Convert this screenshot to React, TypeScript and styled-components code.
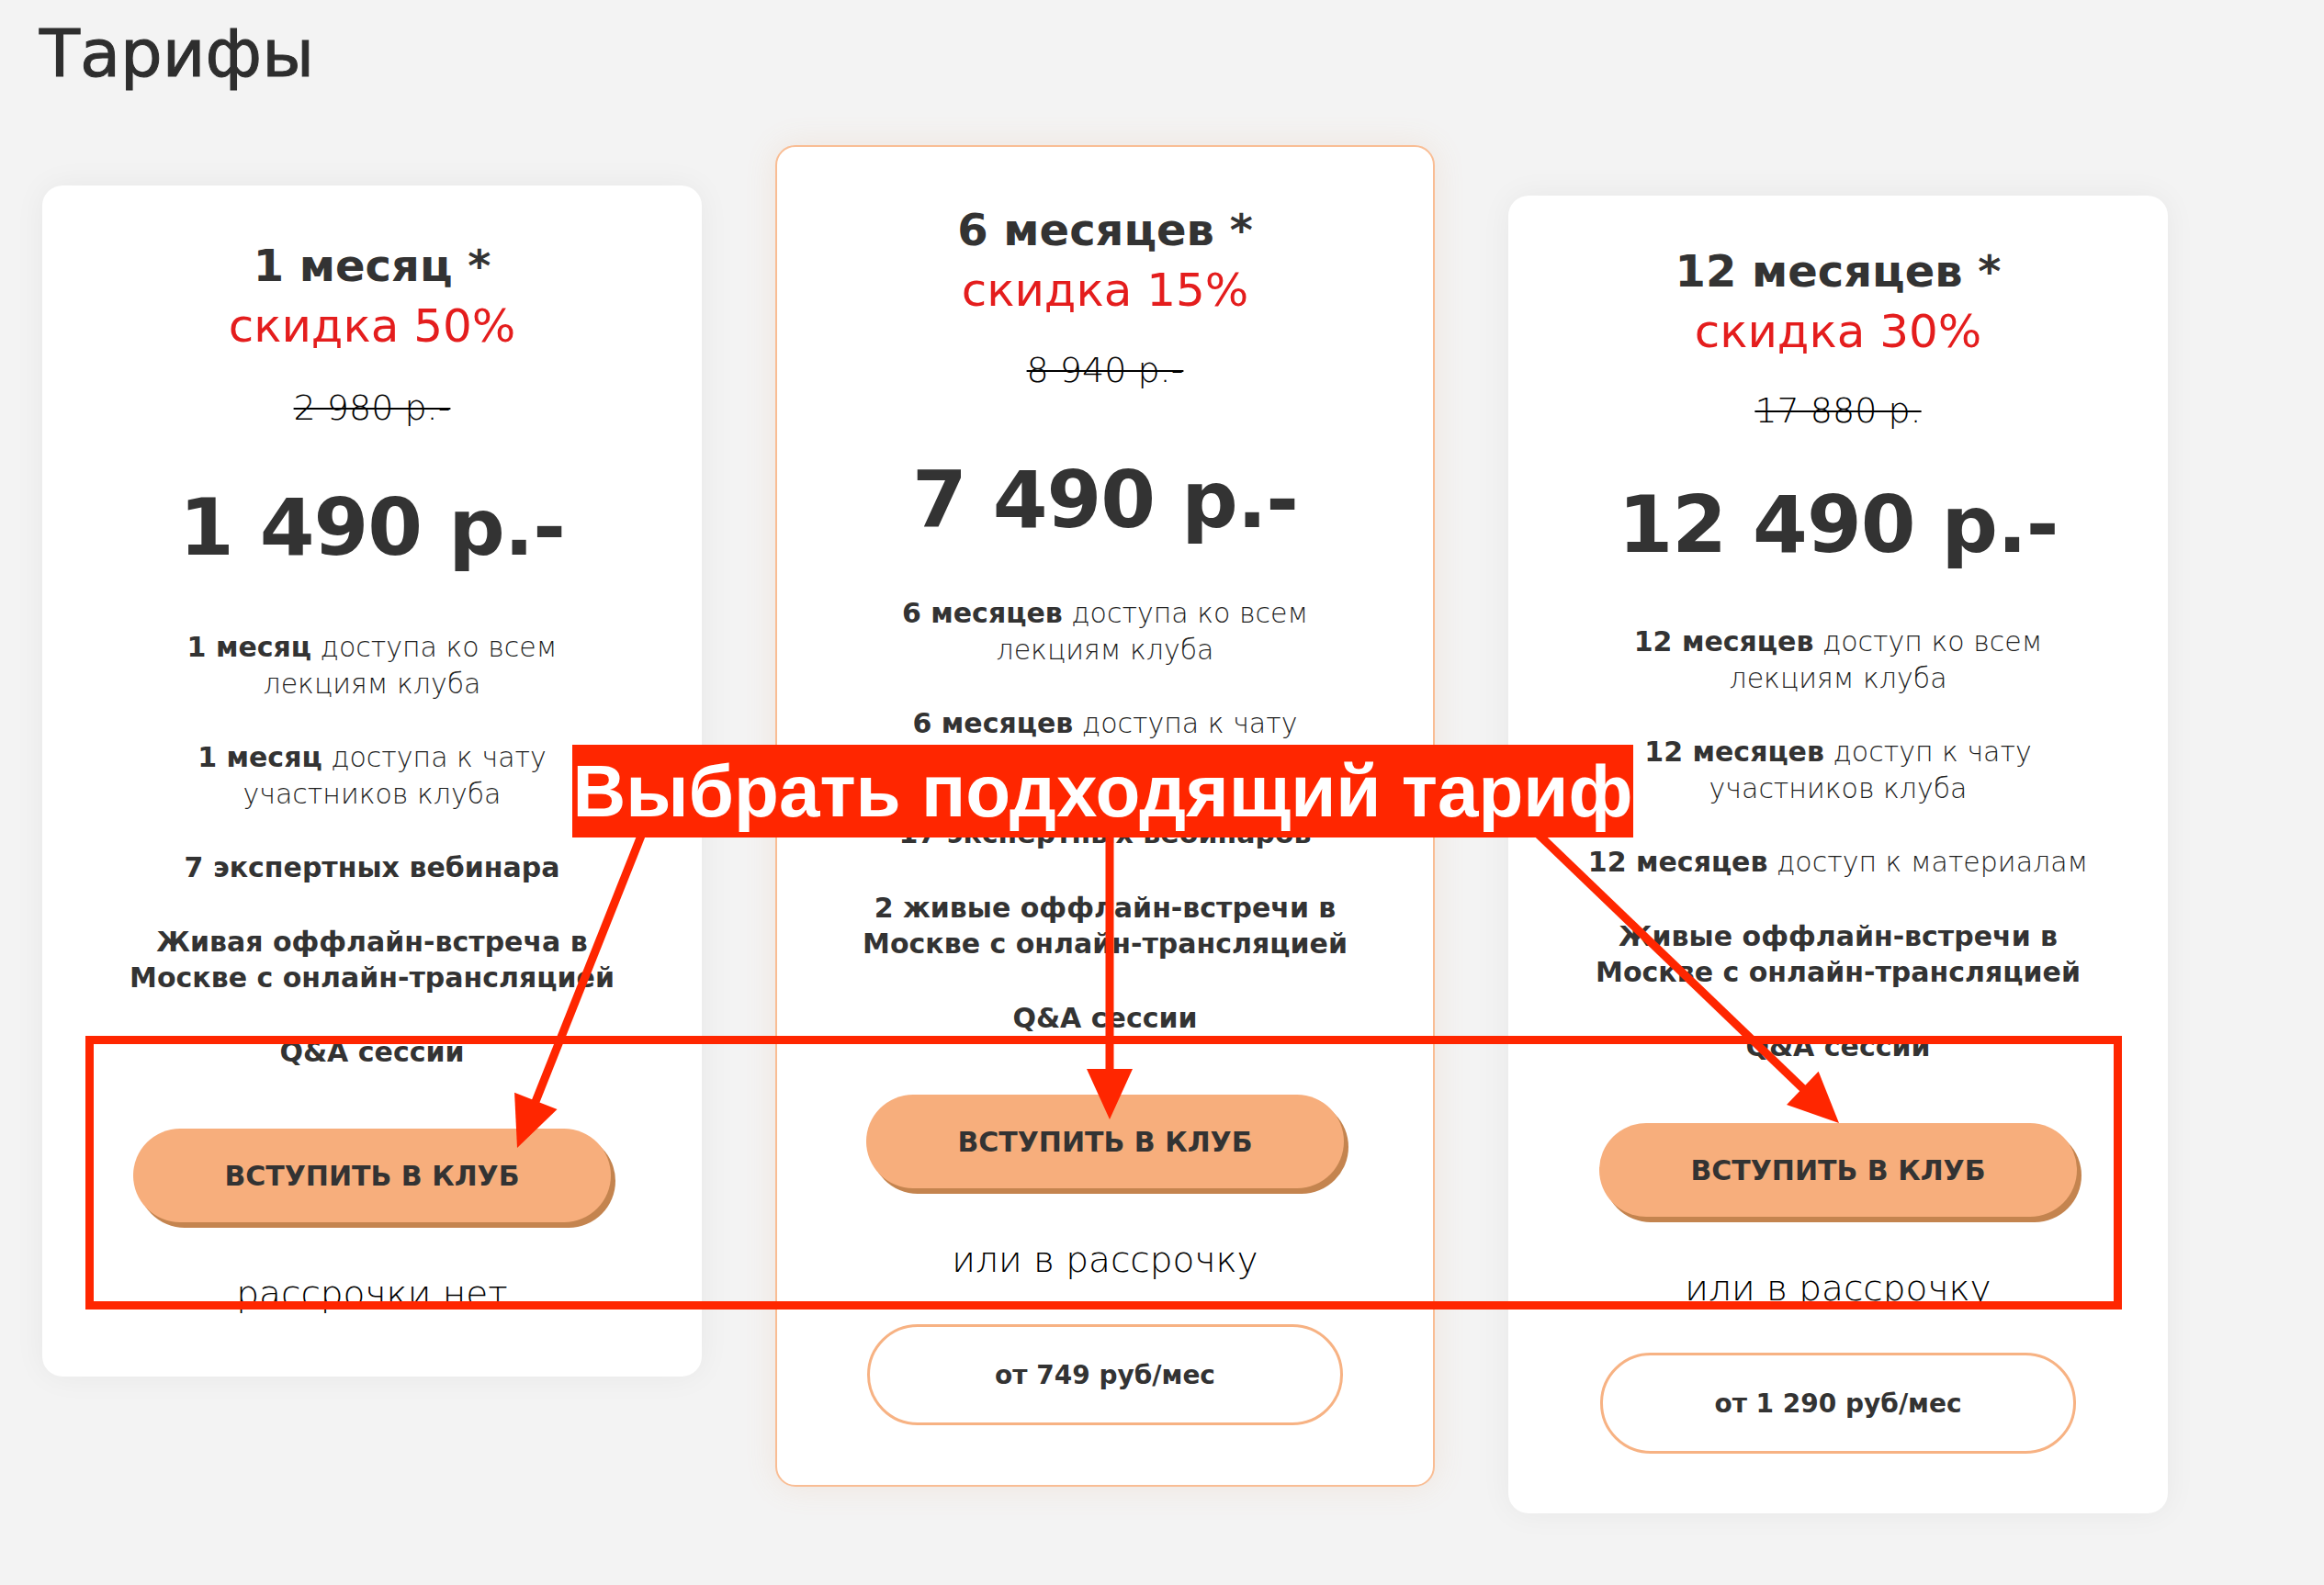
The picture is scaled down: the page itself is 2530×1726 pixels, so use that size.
import React from "react";
import styled, { createGlobalStyle } from "styled-components";

const GlobalStyle = createGlobalStyle`
  html, body {
    margin: 0;
    padding: 0;
    background: #f3f3f3;
  }
  body {
    font-family: "DejaVu Sans", "Noto Sans", sans-serif;
    color: #333;
  }
`;

const Page = styled.div`
  position: relative;
  width: 2530px;
  height: 1726px;
  overflow: hidden;
  background: #f3f3f3;
`;

const Title = styled.h1`
  margin: 22px 0 0 43px;
  font-size: 72px;
  line-height: 72px;
  font-weight: 400;
  color: #2e2e2e;
  -webkit-text-stroke: 1px #2e2e2e;
`;

const Row = styled.div`
  display: flex;
  align-items: flex-start;
  gap: 80px;
  padding-left: 46px;
  margin-top: 64px;
`;

const Card = styled.div<{ $offset: number; $padTop: number; $featured?: boolean }>`
  width: 718px;
  box-sizing: border-box;
  margin-top: ${(p) => p.$offset}px;
  padding: ${(p) => p.$padTop}px 0 65px;
  background: #fff;
  border-radius: 22px;
  border: ${(p) => (p.$featured ? "2px solid #f9bd94" : "none")};
  box-shadow: ${(p) =>
    p.$featured
      ? "0 0 34px rgba(225, 150, 95, 0.14)"
      : "0 0 34px rgba(0, 0, 0, 0.05)"};
  display: flex;
  flex-direction: column;
  align-items: center;
  text-align: center;
`;

const PlanName = styled.div`
  font-size: 48px;
  line-height: 66px;
  font-weight: 700;
  color: #333;
`;

const Discount = styled.div`
  font-size: 50px;
  line-height: 66px;
  font-weight: 400;
  color: #e41d1d;
`;

const OldPrice = styled.div<{ $shift: number }>`
  margin-top: ${(p) => 31 + p.$shift}px;
  font-size: 38px;
  line-height: 50px;
  font-weight: 300;
  color: #000;
  text-decoration: line-through;
  text-decoration-thickness: 2px;
`;

const Price = styled.div<{ $shift: number }>`
  margin-top: ${(p) => 50 + p.$shift}px;
  font-size: 86px;
  line-height: 110px;
  font-weight: 700;
  letter-spacing: -1px;
  color: #333;
`;

const Features = styled.div<{ $shift: number }>`
  margin-top: ${(p) => 56 + p.$shift}px;
  display: flex;
  flex-direction: column;
  align-items: center;
  gap: 41px;
`;

const Feature = styled.div`
  font-size: 30px;
  line-height: 39.5px;
  white-space: nowrap;

  b {
    font-weight: 700;
    color: #333;
  }
`;

const FeatureLine = styled.div<{ $bold?: boolean }>`
  font-weight: ${(p) => (p.$bold ? 700 : 300)};
  color: ${(p) => (p.$bold ? "#333" : "#1f1f1f")};
`;

const JoinButton = styled.button`
  margin-top: 64px;
  width: 520px;
  height: 102px;
  border: none;
  border-radius: 51px;
  background: #f7ae7c;
  box-shadow: 5px 6px 0 #c4844f;
  font-family: "DejaVu Sans", sans-serif;
  font-size: 30px;
  font-weight: 700;
  color: #333;
  text-transform: uppercase;
  cursor: pointer;
`;

const Installment = styled.div`
  margin-top: 53px;
  font-size: 39px;
  line-height: 50px;
  font-weight: 300;
  color: #000;
`;

const InstallmentButton = styled.button`
  margin-top: 45px;
  width: 518px;
  height: 110px;
  box-sizing: border-box;
  border: 3px solid #f7b283;
  border-radius: 55px;
  background: #fff;
  font-family: "DejaVu Sans", sans-serif;
  font-size: 28px;
  font-weight: 700;
  color: #333;
  cursor: pointer;
`;

/* ---------- annotation overlay ---------- */

const Frame = styled.div`
  position: absolute;
  left: 93px;
  top: 1128px;
  width: 2217px;
  height: 298px;
  box-sizing: border-box;
  border: 9px solid #ff2600;
  pointer-events: none;
`;

const Arrows = styled.svg`
  position: absolute;
  left: 0;
  top: 0;
  pointer-events: none;
`;

const Callout = styled.div`
  position: absolute;
  left: 623px;
  top: 811px;
  width: 1155px;
  height: 101px;
  background: #ff2600;
  color: #fff;
  font-family: "Liberation Sans", Arial, sans-serif;
  font-weight: 700;
  font-size: 80px;
  line-height: 101px;
  text-align: center;
  white-space: nowrap;
`;

type Feat = { lines: { bold?: string; text?: string; allBold?: boolean }[] };

type Plan = {
  name: string;
  discount: string;
  old: string;
  price: string;
  offset: number;
  padTop: number;
  featured?: boolean;
  oldShift: number;
  priceShift: number;
  listShift: number;
  features: Feat[];
  installment: string;
  monthly?: string;
};

const plans: Plan[] = [
  {
    name: "1 месяц *",
    discount: "скидка 50%",
    old: "2 980 р.-",
    price: "1 490 р.-",
    offset: 44,
    padTop: 54,
    oldShift: 0,
    priceShift: 0,
    listShift: 0,
    features: [
      { lines: [{ bold: "1 месяц", text: " доступа ко всем" }, { text: "лекциям клуба" }] },
      { lines: [{ bold: "1 месяц", text: " доступа к чату" }, { text: "участников клуба" }] },
      { lines: [{ allBold: true, text: "7 экспертных вебинара" }] },
      {
        lines: [
          { allBold: true, text: "Живая оффлайн-встреча в" },
          { allBold: true, text: "Москве с онлайн-трансляцией" },
        ],
      },
      { lines: [{ allBold: true, text: "Q&A сессии" }] },
    ],
    installment: "рассрочки нет",
  },
  {
    name: "6 месяцев *",
    discount: "скидка 15%",
    old: "8 940 р.-",
    price: "7 490 р.-",
    offset: 0,
    padTop: 57,
    featured: true,
    oldShift: -2,
    priceShift: 11,
    listShift: -7,
    features: [
      { lines: [{ bold: "6 месяцев", text: " доступа ко всем" }, { text: "лекциям клуба" }] },
      { lines: [{ bold: "6 месяцев", text: " доступа к чату" }, { text: "участников клуба" }] },
      { lines: [{ allBold: true, text: "17 экспертных вебинаров" }] },
      {
        lines: [
          { allBold: true, text: "2 живые оффлайн-встречи в" },
          { allBold: true, text: "Москве с онлайн-трансляцией" },
        ],
      },
      { lines: [{ allBold: true, text: "Q&A сессии" }] },
    ],
    installment: "или в рассрочку",
    monthly: "от 749 руб/мес",
  },
  {
    name: "12 месяцев *",
    discount: "скидка 30%",
    old: "17 880 р.",
    price: "12 490 р.-",
    offset: 55,
    padTop: 49,
    oldShift: -3,
    priceShift: -6,
    listShift: -3,
    features: [
      { lines: [{ bold: "12 месяцев", text: " доступ ко всем" }, { text: "лекциям клуба" }] },
      { lines: [{ bold: "12 месяцев", text: " доступ к чату" }, { text: "участников клуба" }] },
      { lines: [{ bold: "12 месяцев", text: " доступ к материалам" }] },
      {
        lines: [
          { allBold: true, text: "Живые оффлайн-встречи в" },
          { allBold: true, text: "Москве с онлайн-трансляцией" },
        ],
      },
      { lines: [{ allBold: true, text: "Q&A сессии" }] },
    ],
    installment: "или в рассрочку",
    monthly: "от 1 290 руб/мес",
  },
];

const RED = "#ff2600";

function Arrow({ x1, y1, x2, y2 }: { x1: number; y1: number; x2: number; y2: number }) {
  const dx = x2 - x1;
  const dy = y2 - y1;
  const len = Math.hypot(dx, dy);
  const ux = dx / len;
  const uy = dy / len;
  const headLen = 55;
  const half = 25;
  const bx = x2 - ux * headLen;
  const by = y2 - uy * headLen;
  const px = -uy;
  const py = ux;
  const pts = `${x2},${y2} ${bx + px * half},${by + py * half} ${bx - px * half},${by - py * half}`;
  return (
    <g>
      <line
        x1={x1}
        y1={y1}
        x2={bx + ux * 4}
        y2={by + uy * 4}
        stroke={RED}
        strokeWidth={9}
      />
      <polygon points={pts} fill={RED} />
    </g>
  );
}

export default function App() {
  return (
    <Page>
      <GlobalStyle />
      <Title>Тарифы</Title>
      <Row>
        {plans.map((p) => (
          <Card key={p.name} $offset={p.offset} $padTop={p.padTop} $featured={p.featured}>
            <PlanName>{p.name}</PlanName>
            <Discount>{p.discount}</Discount>
            <OldPrice $shift={p.oldShift}>{p.old}</OldPrice>
            <Price $shift={p.priceShift}>{p.price}</Price>
            <Features $shift={p.listShift}>
              {p.features.map((f, i) => (
                <Feature key={i}>
                  {f.lines.map((l, j) => (
                    <FeatureLine key={j} $bold={l.allBold}>
                      {l.bold && <b>{l.bold}</b>}
                      {l.text}
                    </FeatureLine>
                  ))}
                </Feature>
              ))}
            </Features>
            <JoinButton>Вступить в клуб</JoinButton>
            <Installment>{p.installment}</Installment>
            {p.monthly && <InstallmentButton>{p.monthly}</InstallmentButton>}
          </Card>
        ))}
      </Row>

      <Frame />
      <Arrows width={2530} height={1726} viewBox="0 0 2530 1726">
        <Arrow x1={700} y1={905} x2={563} y2={1250} />
        <Arrow x1={1208} y1={905} x2={1208} y2={1219} />
        <Arrow x1={1671} y1={905} x2={2002} y2={1223} />
      </Arrows>
      <Callout>Выбрать подходящий тариф</Callout>
    </Page>
  );
}
